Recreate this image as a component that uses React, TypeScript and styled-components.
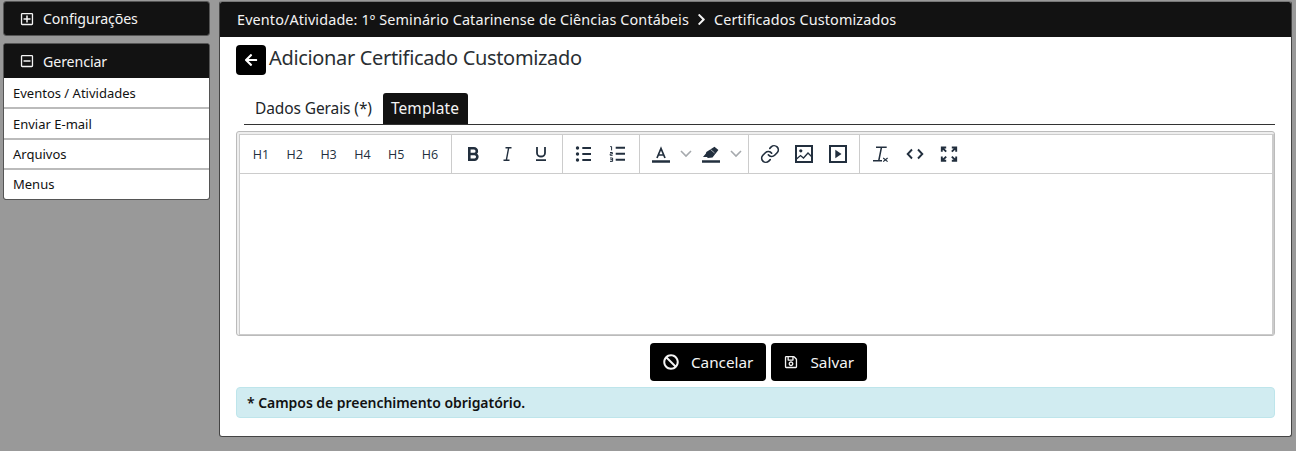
import React, { FC } from 'react';
import styled, { createGlobalStyle } from 'styled-components';
import { FaArrowLeft, FaBan, FaChevronRight, FaRegMinusSquare, FaRegPlusSquare, FaRegSave } from 'react-icons/fa';
import { Link } from 'lucide-react';

const GlobalStyle = createGlobalStyle`
  html, body {
    margin: 0;
    padding: 0;
    height: 451px;
    overflow: hidden;
    background: #999;
    font-family: 'Noto Sans', sans-serif;
    color: #212529;
  }
`;

const Page = styled.div`
  display: flex;
  align-items: flex-start;
  gap: 9px;
  padding: 1px 4px 0 3px;
`;

const Sidebar = styled.aside`
  width: 207px;
  flex: none;
  display: flex;
  flex-direction: column;
  gap: 7px;
`;

const SideCard = styled.section`
  border-radius: 3px;
  border: 1px solid #555;
  overflow: hidden;
  background: #111;
`;

const SideHeader = styled.div<{ $h: number }>`
  height: ${p => p.$h}px;
  display: flex;
  align-items: center;
  gap: 9px;
  padding-left: 16px;
  background: #121212;
  color: #f4f4f4;
  font-size: 14.2px;
  letter-spacing: -0.1px;
`;

const SideItem = styled.a<{ $h: number }>`
  display: flex;
  align-items: center;
  height: ${p => p.$h}px;
  padding-left: 9px;
  background: #fff;
  color: #111;
  font-size: 13px;
  border-bottom: 2px solid #bbb;
  box-sizing: border-box;

  &:last-child {
    border-bottom: 0;
    padding-bottom: 2px;
  }
`;

const Panel = styled.main`
  flex: 1;
  height: 436px;
  box-sizing: border-box;
  background: #fff;
  border: 1px solid #444;
  border-top-color: #777;
  border-radius: 3px;
  overflow: hidden;
`;

const PanelHeader = styled.header`
  height: 35px;
  background: #121212;
  color: #f4f4f4;
  display: flex;
  align-items: center;
  padding-left: 17px;
  gap: 6px;
  font-size: 14.4px;
  letter-spacing: 0.125px;
`;

const PanelBody = styled.div`
  padding: 8px 16px 0;
`;

const TitleRow = styled.div`
  display: flex;
  align-items: flex-start;
  gap: 3px;
  height: 48px;
`;

const BackButton = styled.button`
  width: 30px;
  height: 30px;
  padding: 0;
  border: 0;
  border-radius: 4px;
  background: #000;
  color: #fff;
  display: flex;
  align-items: center;
  justify-content: center;
  font-size: 14px;
`;

const Title = styled.h1`
  margin: 0;
  font-size: 20px;
  font-weight: 400;
  line-height: 26px;
  color: #2a2f33;
  letter-spacing: -0.34px;
`;

const Tabs = styled.div`
  display: flex;
  align-items: flex-end;
  height: 31px;
  margin: 0 0 6px 8px;
  border-bottom: 1px solid #333;
`;

const Tab = styled.div<{ $active?: boolean }>`
  height: 31px;
  box-sizing: border-box;
  display: flex;
  align-items: center;
  padding: ${p => (p.$active ? '0 9px 2px 8px' : '0 11px 2px')};
  font-size: 15.5px;
  border-radius: 3px 3px 0 0;
  background: ${p => (p.$active ? '#121212' : 'transparent')};
  color: ${p => (p.$active ? '#f4f4f4' : '#212529')};
  letter-spacing: ${p => (p.$active ? '0.1px' : '-0.1px')};
`;

const Editor = styled.div`
  height: 205px;
  box-sizing: border-box;
  border: 1px solid #bbb;
  border-radius: 3px;
  background: #eee;
  padding: 2px 0 0 2px;
  display: flex;
`;

const EditorInner = styled.div`
  flex: 1;
  background: #fff;
  border: 1px solid #ccc;
  border-right-width: 2px;
  display: flex;
  flex-direction: column;
`;

const Toolbar = styled.div`
  height: 38px;
  display: flex;
  border-bottom: 1px solid #ccc;
  flex: none;
`;

const ToolGroup = styled.div`
  display: flex;
  align-items: center;
  padding: 0 4px;
  border-right: 1px solid #ccc;

  &:last-child {
    border-right: 0;
  }
`;

const ToolButton = styled.button<{ $w?: number }>`
  width: ${p => p.$w || 34}px;
  height: 34px;
  padding: 0;
  border: 0;
  background: none;
  color: #222f3e;
  font-family: 'Open Sans', sans-serif;
  font-size: 12.5px;
  display: flex;
  align-items: center;
  justify-content: center;
`;

const Actions = styled.div`
  display: flex;
  justify-content: center;
  gap: 5px;
  margin-top: 7px;
  padding-left: 6px;
`;

const ActionButton = styled.button`
  height: 38px;
  padding: 0 13px;
  border: 0;
  border-radius: 4px;
  background: #000;
  color: #f4f4f4;
  font-family: inherit;
  font-size: 15.3px;
  display: flex;
  align-items: center;
  gap: 12px;
`;

const Notice = styled.div`
  height: 31px;
  margin-top: 6px;
  box-sizing: border-box;
  display: flex;
  align-items: center;
  padding-left: 10px;
  background: #d1ecf1;
  border: 1px solid #bee5eb;
  border-radius: 4px;
  color: #111;
  font-size: 14px;
  font-weight: 600;
  letter-spacing: -0.05px;
`;

const Icon: FC<{ children: React.ReactNode }> = ({ children }) => (
  <svg width="20" height="20" viewBox="0 0 20 20" fill="none" stroke="#222f3e" strokeWidth="2">
    {children}
  </svg>
);

const Chevron = () => (
  <svg width="12" height="8" viewBox="0 0 12 8" fill="none" stroke="#a5a9ad" strokeWidth="1.6">
    <path d="M1 1l5 5 5-5" />
  </svg>
);

const items = [
  { label: 'Eventos / Atividades', h: 31 },
  { label: 'Enviar E-mail', h: 31 },
  { label: 'Arquivos', h: 30 },
  { label: 'Menus', h: 29 },
];

const headings = ['H1', 'H2', 'H3', 'H4', 'H5', 'H6'];

export default function App() {
  return (
    <>
      <GlobalStyle />
      <Page>
        <Sidebar>
          <SideCard>
            <SideHeader $h={33}>
              <FaRegPlusSquare size={14} />
              Configurações
            </SideHeader>
          </SideCard>
          <SideCard>
            <SideHeader $h={34}>
              <FaRegMinusSquare size={14} />
              Gerenciar
            </SideHeader>
            {items.map(i => (
              <SideItem key={i.label} $h={i.h}>
                {i.label}
              </SideItem>
            ))}
          </SideCard>
        </Sidebar>
        <Panel>
          <PanelHeader>
            Evento/Atividade: 1º Seminário Catarinense de Ciências Contábeis
            <FaChevronRight size={13} />
            Certificados Customizados
          </PanelHeader>
          <PanelBody>
            <TitleRow>
              <BackButton>
                <FaArrowLeft />
              </BackButton>
              <Title>Adicionar Certificado Customizado</Title>
            </TitleRow>
            <Tabs>
              <Tab>Dados Gerais (*)</Tab>
              <Tab $active>Template</Tab>
            </Tabs>
            <Editor>
              <EditorInner>
                <Toolbar>
                  <ToolGroup>
                    {headings.map(h => (
                      <ToolButton key={h} $w={33.83}>
                        {h}
                      </ToolButton>
                    ))}
                  </ToolGroup>
                  <ToolGroup>
                    <ToolButton>
                      <Icon>
                        <path d="M6.3 4.3H11a2.85 2.85 0 0 1 0 5.7H6.3zM6.3 10h5.2a2.85 2.85 0 0 1 0 5.7H6.3z" strokeWidth="2.6" />
                      </Icon>
                    </ToolButton>
                    <ToolButton>
                      <Icon>
                        <path d="M8.5 3.7h6M6.5 16.3h6M11.7 3.7L9.3 16.3" strokeWidth="1.4" />
                      </Icon>
                    </ToolButton>
                    <ToolButton>
                      <Icon>
                        <path d="M6 3v6a4 3.5 0 0 0 8 0V3" strokeWidth="1.8" />
                        <path d="M5 16.2h10" strokeWidth="1.8" />
                      </Icon>
                    </ToolButton>
                  </ToolGroup>
                  <ToolGroup>
                    <ToolButton>
                      <Icon>
                        <circle cx="3.5" cy="4" r="1.7" fill="#222f3e" stroke="none" />
                        <circle cx="3.5" cy="10" r="1.7" fill="#222f3e" stroke="none" />
                        <circle cx="3.5" cy="16" r="1.7" fill="#222f3e" stroke="none" />
                        <path d="M8.3 4H17M8.3 10H17M8.3 16H17" />
                      </Icon>
                    </ToolButton>
                    <ToolButton>
                      <Icon>
                        <path d="M7.7 3.7H17M7.7 9.7H17M7.7 15.7H17" />
                        <path d="M2.2 2.6h1.4v3.8M2 8.5h2.4v1.4H2.2v1.4h2.4M2 14h2.6v3.4H2M2.4 15.7h2" strokeWidth="1" />
                      </Icon>
                    </ToolButton>
                  </ToolGroup>
                  <ToolGroup>
                    <ToolButton>
                      <Icon>
                        <path d="M6 14L10 4.5 14 14M7.4 11h5.2" strokeWidth="1.7" />
                        <path d="M1 17.5h18" strokeWidth="2.4" />
                      </Icon>
                    </ToolButton>
                    <ToolButton $w={16}>
                      <Chevron />
                    </ToolButton>
                    <ToolButton>
                      <Icon>
                        <path d="M13.5 2.7l3.9 3.4-5.9 7.4-4.6.6-1-1.1H2l2.9-3.4.4-1.6z" fill="#222f3e" stroke="none" />
                        <path d="M9.6 5.6l3.9 3.3" stroke="#fff" strokeWidth="0.6" />
                        <path d="M1 17.5h18" strokeWidth="2.4" />
                      </Icon>
                    </ToolButton>
                    <ToolButton $w={16}>
                      <Chevron />
                    </ToolButton>
                  </ToolGroup>
                  <ToolGroup>
                    <ToolButton>
                      <Link size={20} color="#222f3e" strokeWidth={2} />
                    </ToolButton>
                    <ToolButton>
                      <Icon>
                        <rect x="2" y="2" width="16" height="16" />
                        <circle cx="6.8" cy="6.8" r="1.6" fill="#222f3e" stroke="none" />
                        <path d="M2.5 15l4-3.5 3 2.5 4.5-5 3.5 3.5" strokeWidth="1.3" />
                      </Icon>
                    </ToolButton>
                    <ToolButton>
                      <Icon>
                        <rect x="2" y="2" width="16" height="16" />
                        <path d="M7.3 5.7v8.6l6.2-4.3z" fill="#222f3e" stroke="none" />
                      </Icon>
                    </ToolButton>
                  </ToolGroup>
                  <ToolGroup>
                    <ToolButton>
                      <Icon>
                        <path d="M5 3.2h10.7M10.5 3.2L7.8 16.5M2 16.8h9" strokeWidth="1.5" />
                        <path d="M12.2 14l4.4 3.6M16.6 14l-4.4 3.6" strokeWidth="1.2" />
                      </Icon>
                    </ToolButton>
                    <ToolButton>
                      <Icon>
                        <path d="M7 5.5L2.7 10 7 14.5M13 5.5l4.3 4.5-4.3 4.5" strokeWidth="1.9" />
                      </Icon>
                    </ToolButton>
                    <ToolButton>
                      <Icon>
                        <path d="M2.8 7.8V3.5h4.4M3.4 4l3.8 3.6M17.2 7.8V3.5h-4.4M16.6 4l-3.8 3.6M2.8 12.4v4.3h4.4M3.4 16.2l3.8-3.6M17.2 12.4v4.3h-4.4M16.6 16.2l-3.8-3.6" strokeWidth="1.9" />
                      </Icon>
                    </ToolButton>
                  </ToolGroup>
                </Toolbar>
              </EditorInner>
            </Editor>
            <Actions>
              <ActionButton>
                <FaBan size={16} />
                Cancelar
              </ActionButton>
              <ActionButton>
                <FaRegSave size={14} />
                Salvar
              </ActionButton>
            </Actions>
            <Notice>* Campos de preenchimento obrigatório.</Notice>
          </PanelBody>
        </Panel>
      </Page>
    </>
  );
}
